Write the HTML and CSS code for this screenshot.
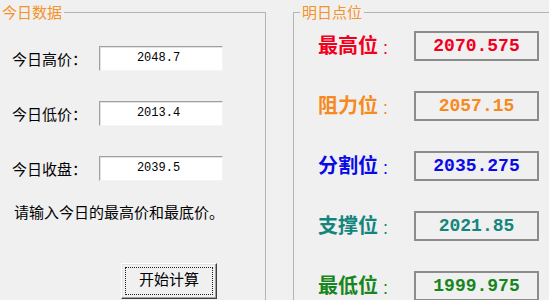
FILE: index.html
```html
<!DOCTYPE html>
<html lang="zh-CN">
<head>
<meta charset="utf-8">
<link rel="stylesheet" href="styles.css">
</head>
<body>
<div class="window">
  <fieldset class="group group-left">
    <legend>今日数据</legend>
    <div class="left-body">
      <div class="form-grid">
        <span class="label">今日高价：</span><div class="field">2048.7</div>
        <span class="label">今日低价：</span><div class="field">2013.4</div>
        <span class="label">今日收盘：</span><div class="field">2039.5</div>
      </div>
      <p class="hint">请输入今日的最高价和最底价。</p>
      <button class="btn" type="button">开始计算</button>
    </div>
  </fieldset>
  <fieldset class="group group-right">
    <legend>明日点位</legend>
    <div class="right-body">
      <span class="rlabel c-red">最高位<span class="colon">：</span></span><div class="rbox c-red">2070.575</div>
      <span class="rlabel c-orange">阻力位<span class="colon">：</span></span><div class="rbox c-orange">2057.15</div>
      <span class="rlabel c-blue">分割位<span class="colon">：</span></span><div class="rbox c-blue">2035.275</div>
      <span class="rlabel c-teal">支撑位<span class="colon">：</span></span><div class="rbox c-teal">2021.85</div>
      <span class="rlabel c-green">最低位<span class="colon">：</span></span><div class="rbox c-green">1999.975</div>
    </div>
  </fieldset>
</div>
</body>
</html>
```
FILE: styles.css
```css
html, body {
  margin: 0;
  padding: 0;
  width: 549px;
  height: 300px;
  overflow: hidden;
  background: #f0f0f0;
}
.window {
  display: flex;
  gap: 27px;
  margin-left: -8px;
  font-family: "Noto Sans CJK SC", "Noto Sans", sans-serif;
  color: #000;
}
.group {
  box-sizing: border-box;
  flex-shrink: 0;
  margin: 0;
  padding: 0;
  border: 1px solid #b4b4b4;
  height: 330px;
  min-width: 0;
}
.group legend {
  font-size: 15px;
  line-height: 24px;
  color: #f5922a;
  padding: 0 2px;
  margin-left: 7px;
}
.group-left {
  width: 274px;
}
.group-right {
  width: 258px;
}
.group-right legend {
  margin-left: 6px;
}
.left-body {
  padding: 22px 0 0 19px;
}
.form-grid {
  display: grid;
  grid-template-columns: 87px 124px;
  grid-auto-rows: 25px;
  row-gap: 30px;
  align-items: center;
}
.label {
  font-size: 15px;
  line-height: 25px;
}
.field {
  box-sizing: border-box;
  height: 25px;
  background: #fff;
  border: 1px solid;
  border-color: #a0a0a0 #f4f4f4 #f4f4f4 #a0a0a0;
  box-shadow: inset 1px 1px 0 #e2e2e2;
  font-family: "Liberation Mono", monospace;
  font-size: 12px;
  line-height: 23px;
  text-align: center;
  padding-right: 5px;
}
.hint {
  margin: 21px 0 0 2px;
  font-size: 15px;
  line-height: 20px;
}
.btn {
  position: relative;
  display: block;
  margin: 41px 0 0 109px;
  width: 96px;
  height: 36px;
  padding: 0 0 4px;
  background: #f0f0f0;
  border: 1px solid;
  border-color: #ffffff #404040 #404040 #ffffff;
  box-shadow: inset -1px -1px 0 #a0a0a0, inset 1px 1px 0 #e3e3e3;
  font-family: "Noto Sans CJK SC", sans-serif;
  font-size: 15px;
  color: #000;
  text-align: center;
  line-height: 30px;
}
.btn::after {
  content: "";
  position: absolute;
  inset: 3px;
  border: 1px dotted #202020;
}
.right-body {
  display: grid;
  grid-template-columns: 96px 125px;
  grid-auto-rows: 30px;
  row-gap: 30px;
  align-items: center;
  padding: 7px 0 0 24px;
}
.rlabel {
  font-size: 20px;
  font-weight: bold;
  line-height: 30px;
  white-space: nowrap;
}
.colon {
  font-size: 14px;
  font-weight: normal;
  margin-left: 4px;
}
.rbox {
  box-sizing: border-box;
  height: 30px;
  border: 2px solid #8c8c8c;
  background: #f0f0f0;
  font-family: "Liberation Mono", monospace;
  font-weight: bold;
  font-size: 18px;
  line-height: 26px;
  text-align: center;
}
.c-red { color: #f0001e; }
.c-orange { color: #f78a1e; }
.c-blue { color: #0a0ae6; }
.c-teal { color: #14857d; }
.c-green { color: #18861e; }
```
